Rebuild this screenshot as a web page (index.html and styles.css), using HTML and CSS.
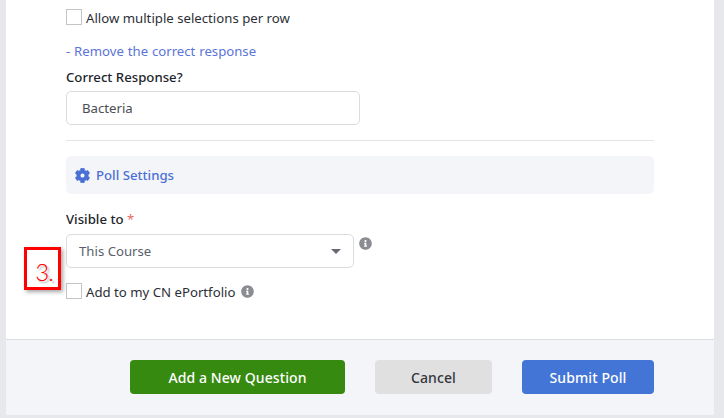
FILE: index.html
```html
<!DOCTYPE html>
<html lang="en">
<head>
<meta charset="utf-8">
<title>Poll</title>
<link rel="stylesheet" href="styles.css">
</head>
<body>
<div class="modal">
  <div class="content">
    <label class="check-row first"><span class="box"></span><span class="check-text">Allow multiple selections per row</span></label>
    <a class="remove">- Remove the correct response</a>
    <div class="label correct-label">Correct Response?</div>
    <div class="input">Bacteria</div>
    <hr class="rule">
    <div class="section">
      <svg class="gear" viewBox="0 0 512 512"><path fill="currentColor" d="M487.4 315.7l-42.6-24.6c4.3-23.2 4.3-47 0-70.2l42.6-24.6c4.9-2.8 7.1-8.6 5.5-14-11.1-35.6-30-67.8-54.7-94.6-3.8-4.1-10-5.1-14.8-2.3L380.8 110c-17.9-15.4-38.5-27.3-60.8-35.1V25.8c0-5.6-3.9-10.500-9.400-11.700-36.700-8.200-74.300-7.800-109.200 0-5.500 1.200-9.400 6.100-9.400 11.700V75c-22.200 7.900-42.800 19.800-60.800 35.100L88.700 85.500c-4.900-2.800-11-1.900-14.800 2.300-24.700 26.700-43.600 58.900-54.700 94.600-1.700 5.400.6 11.200 5.500 14L67.300 221c-4.300 23.200-4.300 47 0 70.200l-42.600 24.600c-4.900 2.800-7.100 8.600-5.500 14 11.100 35.600 30 67.800 54.700 94.600 3.800 4.100 10 5.100 14.800 2.300l42.600-24.600c17.900 15.400 38.500 27.300 60.800 35.100v49.200c0 5.600 3.900 10.500 9.400 11.700 36.700 8.200 74.300 7.800 109.200 0 5.500-1.200 9.400-6.100 9.400-11.700v-49.200c22.200-7.900 42.800-19.800 60.800-35.100l42.600 24.600c4.900 2.800 11 1.900 14.800-2.300 24.700-26.700 43.600-58.900 54.700-94.600 1.500-5.500-.7-11.300-5.600-14.100zM256 336c-44.100 0-80-35.900-80-80s35.900-80 80-80 80 35.900 80 80-35.900 80-80 80z"/></svg>
      <span>Poll Settings</span>
    </div>
    <div class="label visible-label">Visible to <span class="req">*</span></div>
    <div class="select-row">
      <div class="select"><span>This Course</span><span class="caret"></span></div>
      <svg class="info info-select" viewBox="0 0 512 512"><path fill="currentColor" d="M256 8C119 8 8 119 8 256s111 248 248 248 248-111 248-248S393 8 256 8zm0 110c23.200 0 42 18.800 42 42s-18.800 42-42 42-42-18.800-42-42 18.800-42 42-42zm56 254c0 6.600-5.400 12-12 12h-88c-6.600 0-12-5.400-12-12v-24c0-6.600 5.400-12 12-12h12v-64h-12c-6.600 0-12-5.400-12-12v-24c0-6.600 5.400-12 12-12h64c6.600 0 12 5.400 12 12v100h12c6.600 0 12 5.400 12 12v24z"/></svg>
    </div>
    <label class="check-row second"><span class="box"></span><span class="check-text">Add to my CN ePortfolio</span>
      <svg class="info info-check" viewBox="0 0 512 512"><path fill="currentColor" d="M256 8C119 8 8 119 8 256s111 248 248 248 248-111 248-248S393 8 256 8zm0 110c23.200 0 42 18.800 42 42s-18.800 42-42 42-42-18.800-42-42 18.800-42 42-42zm56 254c0 6.600-5.400 12-12 12h-88c-6.600 0-12-5.400-12-12v-24c0-6.600 5.400-12 12-12h12v-64h-12c-6.600 0-12-5.400-12-12v-24c0-6.600 5.400-12 12-12h64c6.600 0 12 5.400 12 12v100h12c6.600 0 12 5.400 12 12v24z"/></svg>
    </label>
  </div>
  <div class="footer">
    <button class="btn green">Add a New Question</button>
    <button class="btn grey">Cancel</button>
    <button class="btn blue">Submit Poll</button>
  </div>
</div>
<div class="callout">3.</div>
</body>
</html>
```
FILE: styles.css
```css
html, body { margin: 0; padding: 0; }
body {
  width: 724px;
  height: 418px;
  overflow: hidden;
  background: #e7e8ec;
  font-family: "Noto Sans", "Open Sans", sans-serif;
  font-size: 13.2px;
  color: #2c2f36;
  position: relative;
}
.modal {
  margin-left: 6px;
  width: 708px;
  height: 415px;
  background: #fff;
  display: flex;
  flex-direction: column;
  border-radius: 0 0 3px 3px;
}
.content {
  flex: 1;
  padding: 9px 60px 0;
  display: flex;
  flex-direction: column;
  align-items: flex-start;
}
.check-row { display: flex; align-items: center; height: 16px; line-height: 16px; }
.check-text { margin-top: 2px; }
.box {
  width: 14px;
  height: 14px;
  border: 1px solid #c4c4c4;
  margin-right: 4px;
  background: #fff;
}
.remove { color: #5b74d8; margin-top: 17px; line-height: 18px; height: 18px; word-spacing: .4px; }
.label { font-weight: 500; line-height: 18px; color: #22252b; }
.correct-label { margin-top: 8px; }
.input {
  box-sizing: border-box;
  width: 294px;
  height: 34px;
  margin-top: 5px;
  border: 1px solid #dcdcdf;
  border-radius: 5px;
  padding-left: 15px;
  line-height: 32px;
  color: #4a4d55;
}
.rule { width: 588px; height: 1px; border: 0; background: #e4e4e6; margin: 15px 0 15px; }
.section {
  box-sizing: border-box;
  width: 588px;
  height: 38px;
  background: #f4f5f9;
  border-radius: 5px;
  padding-left: 9px;
  display: flex;
  align-items: center;
  gap: 6px;
  color: #4a6fd4;
  font-weight: 500;
}
.gear { width: 15px; height: 15px; stroke: currentColor; stroke-width: 24px; }
.visible-label { margin-top: 16px; }
.req { color: #e8695f; font-weight: 400; }
.select-row { display: flex; margin-top: 6px; align-items: flex-start; }
.select {
  box-sizing: border-box;
  width: 288px;
  height: 34px;
  border: 1px solid #dcdcdf;
  border-radius: 5px;
  padding: 0 12px;
  display: flex;
  align-items: center;
  justify-content: space-between;
  color: #5a5f6b;
}
.caret {
  width: 0;
  height: 0;
  border-left: 5px solid transparent;
  border-right: 5px solid transparent;
  border-top: 5px solid #666a72;
}
.info { width: 13px; height: 13px; color: #8b8d92; margin-left: 5px; }
.info-select { margin-top: 3px; }
.info-check { margin-left: 6px; }
.second { margin-top: 15px; }
.footer {
  height: 55px;
  flex: none;
  border-top: 1px solid #dcdde0;
  background: #f4f5f9;
  display: flex;
  align-items: flex-start;
  padding: 20px 0 0 124px;
}
.btn {
  height: 34px;
  border: 0;
  border-radius: 4px;
  font-family: inherit;
  font-size: 14px;
  font-weight: 500;
  letter-spacing: .1px;
  padding: 0;
}
.green { width: 215px; background: #368a10; color: #fff; }
.grey { width: 117px; margin-left: 30px; background: #e0e0e0; color: #33363c; }
.blue { width: 132px; margin-left: 30px; background: #4375d6; color: #fff; }
.callout {
  position: absolute;
  left: 24px;
  top: 247px;
  box-sizing: border-box;
  width: 37px;
  height: 43px;
  border: 3px solid #f00;
  box-shadow: 2px 2px 4px rgba(0,0,0,.35);
  color: #f00;
  background: #fff;
  font-family: "Lato", sans-serif;
  font-weight: 300;
  font-size: 24px;
  line-height: 43px;
  padding-left: 3px;
  text-align: center;
  letter-spacing: -1px;
  text-shadow: 2px 2px 2px rgba(0,0,0,.3);
}
```
